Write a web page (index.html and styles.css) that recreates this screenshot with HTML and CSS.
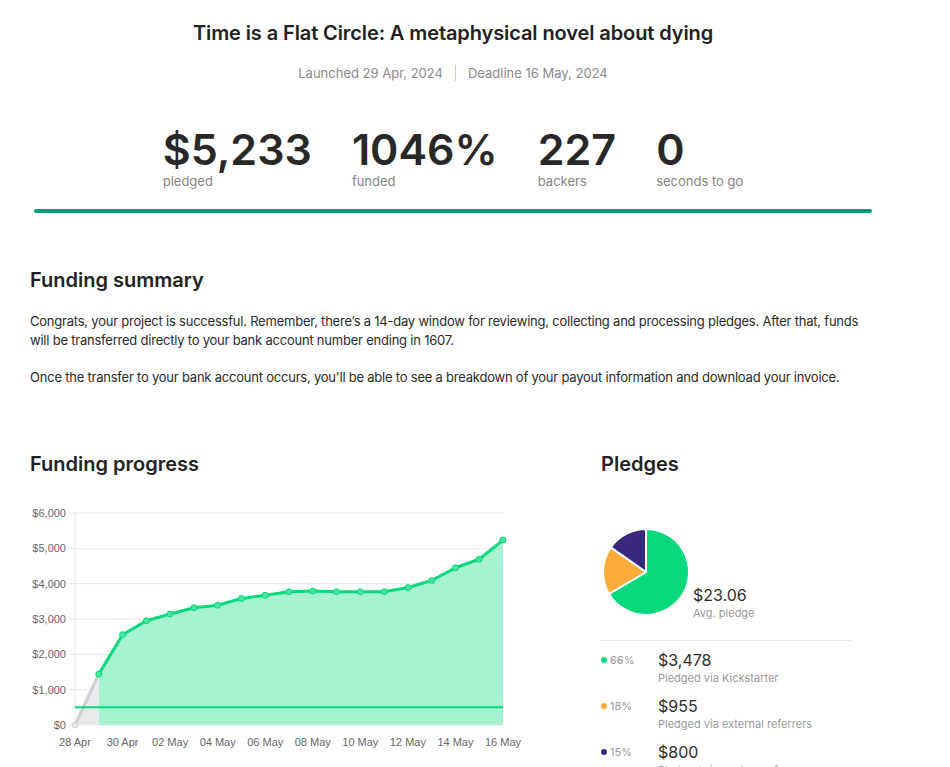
FILE: index.html
```html
<!DOCTYPE html>
<html lang="en">
<head>
  <meta charset="UTF-8" />
  <meta name="viewport" content="width=device-width, initial-scale=1" />
  <title>Time is a Flat Circle - Project dashboard</title>
  <link rel="stylesheet" href="styles.css">
</head>
<body>
  <div class="page">
    <header class="project-head">
      <h1>Time is a Flat Circle: A metaphysical novel about dying</h1>
      <p class="dates">
        <span>Launched 29 Apr, 2024</span>
        <span class="sep"></span>
        <span>Deadline 16 May, 2024</span>
      </p>

      <div class="stats">
        <div class="stat"><span class="stat-num">$5,233</span><span class="stat-label">pledged</span></div>
        <div class="stat"><span class="stat-num">1046%</span><span class="stat-label">funded</span></div>
        <div class="stat"><span class="stat-num">227</span><span class="stat-label">backers</span></div>
        <div class="stat"><span class="stat-num">0</span><span class="stat-label">seconds to go</span></div>
      </div>
      <div class="progress"></div>
    </header>

    <section class="summary">
      <h2>Funding summary</h2>
      <p>Congrats, your project is successful. Remember, there’s a 14-day window for reviewing, collecting and processing pledges. After that, funds will be transferred directly to your bank account number ending in 1607.</p>
      <p>Once the transfer to your bank account occurs, you'll be able to see a breakdown of your payout information and download your invoice.</p>
    </section>

    <div class="columns">
      <section class="progress-chart">
        <h2>Funding progress</h2>
        <svg id="chart" class="chart" width="520" height="255" viewBox="0 0 520 255"></svg>
      </section>

      <section class="pledges">
        <h2>Pledges</h2>
        <div class="pie-row">
          <svg class="pie" width="90" height="90" viewBox="0 0 90 90" id="pie"></svg>
          <div class="avg">
            <div class="amount">$23.06</div>
            <div class="caption">Avg. pledge</div>
          </div>
        </div>

        <ul class="sources" id="sources"></ul>
      </section>
    </div>
  </div>

  <script>
    // daily totals, 28 Apr -> 16 May
    const totals = [0, 1440, 2556, 2950, 3140, 3320, 3390, 3580, 3670, 3770, 3790,
      3770, 3770, 3770, 3890, 4090, 4450, 4690, 5233];
    const goal = 500;

    const sources = [
      { pct: '66%', val: 3478, label: 'Pledged via Kickstarter', color: '#05d97b' },
      { pct: '18%', val: 955, label: 'Pledged via external referrers', color: '#fbab38' },
      { pct: '15%', val: 800, label: 'Pledged via custom referrers', color: '#3b2680' }
    ];

    const NS = 'http://www.w3.org/2000/svg';
    const chart = document.getElementById('chart');

    const plot = { left: 45, right: 473, top: 14, bottom: 226, max: 6000 };
    const xAt = (i) => plot.left + (plot.right - plot.left) * i / (totals.length - 1);
    const yAt = (v) => plot.bottom - (plot.bottom - plot.top) * v / plot.max;

    function el(name, attrs, parent) {
      const node = document.createElementNS(NS, name);
      Object.keys(attrs).forEach((k) => node.setAttribute(k, attrs[k]));
      parent.appendChild(node);
      return node;
    }

    // grid + y labels
    for (let v = 0; v <= plot.max; v += 1000) {
      const y = yAt(v);
      el('line', { x1: plot.left - 6, x2: plot.right, y1: y, y2: y, class: 'grid' }, chart);
      const t = el('text', { x: 36, y: y + 4, class: 'axis', 'text-anchor': 'end' }, chart);
      t.textContent = '$' + v.toLocaleString('en-US');
    }
    el('line', { x1: plot.left, x2: plot.left, y1: plot.top, y2: plot.bottom, class: 'grid' }, chart);

    // x labels every two days
    const labels = ['28 Apr', '30 Apr', '02 May', '04 May', '06 May', '08 May', '10 May', '12 May', '14 May', '16 May'];
    labels.forEach((txt, n) => {
      const t = el('text', { x: xAt(n * 2), y: 247, class: 'axis', 'text-anchor': 'middle' }, chart);
      t.textContent = txt;
    });

    // pre-launch part in grey
    el('polygon', {
      points: `${xAt(0)},${plot.bottom} ${xAt(1)},${yAt(totals[1])} ${xAt(1)},${plot.bottom}`,
      class: 'area-pre'
    }, chart);
    el('line', { x1: xAt(0), y1: yAt(0), x2: xAt(1), y2: yAt(totals[1]), class: 'line-pre' }, chart);

    // funded area
    let pts = '';
    for (let i = 1; i < totals.length; i++) pts += `${xAt(i)},${yAt(totals[i])} `;
    el('polygon', { points: `${xAt(1)},${plot.bottom} ${pts}${plot.right},${plot.bottom}`, class: 'area' }, chart);

    // goal line
    el('line', { x1: plot.left, x2: plot.right, y1: yAt(goal), y2: yAt(goal), class: 'goal' }, chart);

    el('polyline', { points: pts, class: 'line' }, chart);
    el('circle', { cx: xAt(0), cy: yAt(0), r: 3, class: 'dot-pre' }, chart);
    for (let i = 1; i < totals.length; i++) {
      el('circle', { cx: xAt(i), cy: yAt(totals[i]), r: 3, class: 'dot' }, chart);
    }

    // pie
    const pie = document.getElementById('pie');
    const sum = sources.reduce((a, s) => a + s.val, 0);
    let angle = 0;
    sources.forEach((s) => {
      const a0 = angle;
      const a1 = angle + s.val / sum * Math.PI * 2;
      angle = a1;
      const r = 43, cx = 45, cy = 45;
      const x0 = cx + r * Math.sin(a0), y0 = cy - r * Math.cos(a0);
      const x1 = cx + r * Math.sin(a1), y1 = cy - r * Math.cos(a1);
      const large = a1 - a0 > Math.PI ? 1 : 0;
      el('path', {
        d: `M${cx},${cy} L${x0},${y0} A${r},${r} 0 ${large} 1 ${x1},${y1} Z`,
        fill: s.color,
        class: 'slice'
      }, pie);
    });

    // sources list
    const list = document.getElementById('sources');
    sources.forEach((s) => {
      const li = document.createElement('li');
      li.innerHTML = `
        <span class="share"><i style="background:${s.color}"></i>${s.pct}</span>
        <span class="detail">
          <span class="amount">$${s.val.toLocaleString('en-US')}</span>
          <span class="caption">${s.label}</span>
        </span>`;
      list.appendChild(li);
    });
  </script>
</body>
</html>
```

FILE: styles.css
```css
html, body {
  margin: 0;
  padding: 0;
  background: #fff;
  color: #222;
  font-family: Inter, 'Noto Sans', sans-serif;
}
.page {
  width: 846px;
  padding: 19px 30px 0;
}
h1 {
  margin: 0;
  font-size: 20px;
  line-height: 28px;
  font-weight: 600;
  color: #222;
  letter-spacing: -0.1px;
}
h2 {
  margin: 0;
  font-size: 20px;
  line-height: 28px;
  font-weight: 600;
  color: #222;
}
.project-head {
  text-align: center;
}
.dates {
  margin: 17px 0 0;
  font-size: 13px;
  line-height: 18px;
  color: #8a8a8a;
  display: flex;
  justify-content: center;
  align-items: center;
  gap: 12px;
}
.dates .sep {
  width: 1px;
  height: 16px;
  background: #dcc8b6;
}
.stats {
  margin-top: 42px;
  display: flex;
  justify-content: center;
  gap: 40px;
  text-align: left;
}
.stat {
  display: flex;
  flex-direction: column;
}
.stat-num {
  font-size: 43px;
  line-height: 50px;
  font-weight: 600;
  color: #282828;
}
.stat-label {
  font-size: 13px;
  line-height: 15px;
  color: #858585;
}
.progress {
  margin: 20px 4px 0;
  height: 4px;
  border-radius: 2px;
  background: #039c78;
}

.summary {
  margin-top: 53px;
}
.summary p {
  margin: 18px 0 0;
  font-size: 13px;
  line-height: 18.5px;
  letter-spacing: -0.22px;
  color: #2a2a2a;
}
.summary p + p {
  margin-top: 19px;
}

.columns {
  margin-top: 63px;
  display: grid;
  grid-template-columns: 571px 252px;
}
.chart {
  display: block;
  margin-top: 21px;
}
.chart .grid {
  stroke: #e6e6e6;
  stroke-width: 1;
}
.chart .axis {
  font-family: 'Liberation Sans', Arial, sans-serif;
  font-size: 11px;
  fill: #666;
}
.chart .area {
  fill: #a7f3d1;
}
.chart .area-pre {
  fill: #e9e9ec;
}
.chart .line {
  fill: none;
  stroke: #05d97b;
  stroke-width: 3;
  stroke-linejoin: round;
}
.chart .line-pre {
  stroke: #cfcfd3;
  stroke-width: 3;
}
.chart .goal {
  stroke: #05d97b;
  stroke-width: 2;
}
.chart .dot {
  fill: #4ee39d;
  stroke: #05d97b;
  stroke-width: 1;
}
.chart .dot-pre {
  fill: #e6e6e8;
  stroke: #cfcfd3;
  stroke-width: 1;
}

.pie-row {
  margin-top: 49px;
  display: flex;
  align-items: flex-end;
  gap: 2px;
  padding-bottom: 23px;
  border-bottom: 1px solid #e8e8e8;
}
.pie {
  display: block;
}
.pie .slice {
  stroke: #fff;
  stroke-width: 2;
  stroke-linejoin: round;
}
.avg {
  margin-bottom: -3px;
}
.amount {
  display: block;
  font-size: 16px;
  line-height: 20px;
  color: #2c2c2c;
}
.caption {
  display: block;
  margin-top: 1px;
  font-size: 11px;
  line-height: 14px;
  color: #999;
}
.sources {
  list-style: none;
  margin: 0;
  padding: 9px 0 0;
}
.sources li {
  display: flex;
  margin-bottom: 11px;
}
.share {
  width: 57px;
  flex: none;
  display: flex;
  align-items: center;
  height: 20px;
  font-size: 11px;
  color: #999;
  gap: 3px;
}
.share i {
  display: block;
  width: 6px;
  height: 6px;
  border-radius: 50%;
}
```
